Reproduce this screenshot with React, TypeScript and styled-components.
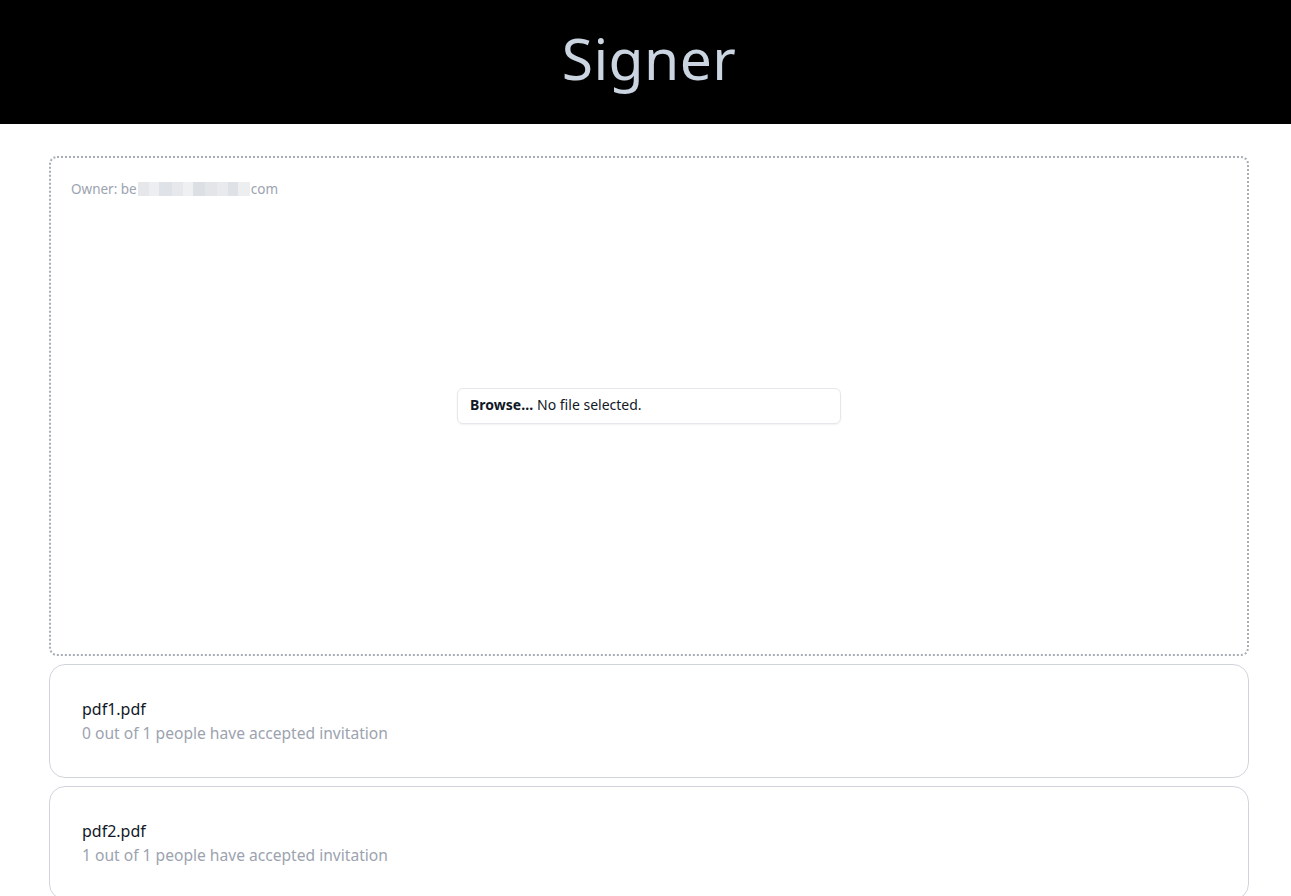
import React from "react";
import styled, { createGlobalStyle } from "styled-components";

const Global = createGlobalStyle`
  html { overflow-x: hidden; }
  html, body { margin: 0; padding: 0; background: #ffffff; }
  body { font-family: "Noto Sans", "Open Sans", sans-serif; width: 1298px; }
  * { box-sizing: border-box; }
`;

const Header = styled.header`
  height: 124px;
  background: #000000;
  display: flex;
  align-items: center;
  justify-content: center;
`;

const Title = styled.h1`
  margin: 0;
  font-family: "Noto Sans", sans-serif;
  font-weight: 400;
  font-size: 57px;
  letter-spacing: 0.4px;
  color: #cbd5e1;
  line-height: 1;
  padding-bottom: 8px;
`;

const Main = styled.main`
  width: 1200px;
  margin: 32px auto 0;
  display: flex;
  flex-direction: column;
  gap: 8px;
`;

const DropZone = styled.section`
  height: 500px;
  border: 2px dotted #a8adb5;
  border-radius: 8px;
  padding: 21px 20px;
  display: flex;
  flex-direction: column;
`;

const Owner = styled.div`
  font-size: 13.5px;
  color: #9ca3af;
  display: flex;
  align-items: center;
  line-height: 20px;
`;

const Blur = styled.span`
  display: inline-flex;
  height: 14px;
  margin: 0 1px;
`;

const BlurBlock = styled.span<{ $w: number; $c: string }>`
  display: inline-block;
  width: ${(p) => p.$w}px;
  height: 100%;
  background: ${(p) => p.$c};
`;

const Center = styled.div`
  flex: 1;
  display: flex;
  align-items: center;
  justify-content: center;
  padding-bottom: 20px;
`;

const FileBox = styled.label`
  width: 384px;
  height: 36px;
  border: 1px solid #e5e7eb;
  border-radius: 6px;
  box-shadow: 0 1px 2px rgba(0, 0, 0, 0.06);
  display: flex;
  align-items: center;
  padding: 0 12px 4px;
  font-size: 14px;
  color: #111827;
  gap: 4px;
`;

const Browse = styled.span`
  font-weight: 700;
`;

const Card = styled.article`
  border: 1px solid #d1d5db;
  border-radius: 16px;
  padding: 32px 32px;
  display: flex;
  flex-direction: column;
`;

const FileName = styled.div`
  font-size: 16px;
  line-height: 24px;
  color: #111827;
`;

const Status = styled.div`
  font-size: 15.6px;
  line-height: 24px;
  color: #9ca3af;
`;

const blocks: [number, string][] = [
  [11, "#e5e7eb"], [10, "#eceef1"], [13, "#dfe2e6"], [11, "#e6e8eb"],
  [10, "#eef0f2"], [12, "#dcdfe4"], [12, "#e3e5e9"], [11, "#e8eaed"],
  [10, "#dee1e5"], [12, "#eceef0"],
];

const docs = [
  { name: "pdf1.pdf", accepted: 0, total: 1 },
  { name: "pdf2.pdf", accepted: 1, total: 1 },
];

export default function App() {
  return (
    <>
      <Global />
      <Header>
        <Title>Signer</Title>
      </Header>
      <Main>
        <DropZone>
          <Owner>
            Owner: be
            <Blur>
              {blocks.map(([w, c], i) => (
                <BlurBlock key={i} $w={w} $c={c} />
              ))}
            </Blur>
            com
          </Owner>
          <Center>
            <FileBox>
              <Browse>Browse…</Browse>
              <span>No file selected.</span>
            </FileBox>
          </Center>
        </DropZone>
        {docs.map((d) => (
          <Card key={d.name}>
            <FileName>{d.name}</FileName>
            <Status>
              {d.accepted} out of {d.total} people have accepted invitation
            </Status>
          </Card>
        ))}
      </Main>
    </>
  );
}
